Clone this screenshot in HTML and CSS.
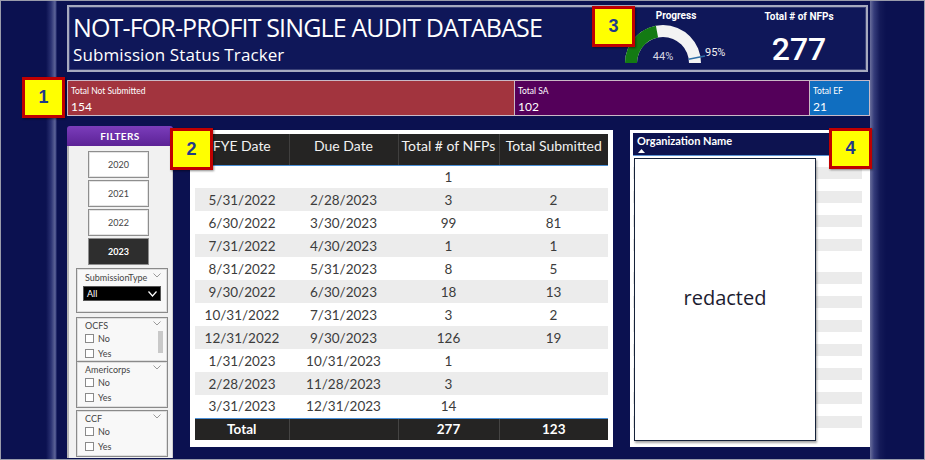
FILE: index.html
```html
<!DOCTYPE html>
<html>
<head>
<meta charset="utf-8">
<title>Not-for-Profit Single Audit Database</title>
<link rel="stylesheet" href="styles.css">
</head>
<body>
<div class="frame">
  <div class="side side-left"></div>
  <main class="canvas">
    <header class="banner">
      <div class="titles">
        <div class="title">NOT-FOR-PROFIT SINGLE AUDIT DATABASE</div>
        <div class="subtitle">Submission Status Tracker</div>
      </div>
      <div class="gauge">
        <div class="kpi-label">Progress</div>
        <svg class="gauge-svg" width="122" height="48" viewBox="0 0 122 48">
          <path d="M10 41 A38 38 0 0 1 86 41 L74 41 A26 26 0 0 0 22 41 Z" fill="#f3f3f3"/>
          <path d="M10 41 A38 38 0 0 1 40.9 3.7 L43.1 15.5 A26 26 0 0 0 22 41 Z" fill="#137a13"/>
          <line x1="73.5" y1="37.2" x2="90" y2="34" stroke="#2f6ea6" stroke-width="1.4"/>
          <text x="48" y="38" text-anchor="middle" class="g-val">44%</text>
          <text x="90" y="34" class="g-tgt">95%</text>
        </svg>
      </div>
      <div class="total">
        <div class="kpi-label">Total # of NFPs</div>
        <div class="total-value">277</div>
      </div>
    </header>

    <section class="status">
      <div class="stat stat-red"><span class="stat-label">Total Not Submitted</span><span class="stat-value">154</span></div>
      <div class="stat stat-purple"><span class="stat-label">Total SA</span><span class="stat-value">102</span></div>
      <div class="stat stat-blue"><span class="stat-label">Total EF</span><span class="stat-value">21</span></div>
    </section>

    <section class="main">
      <aside class="filters">
        <div class="filters-head">FILTERS</div>
        <div class="filters-body">
          <div class="year">2020</div>
          <div class="year">2021</div>
          <div class="year">2022</div>
          <div class="year active">2023</div>

          <div class="slicer slicer-type">
            <div class="slicer-head"><span>SubmissionType</span><svg class="chev" width="8" height="5" viewBox="0 0 8 5"><polyline points="0.5,0.5 4,4 7.5,0.5" fill="none" stroke="#9a9a9a" stroke-width="1"/></svg></div>
            <div class="dropdown"><span>All</span><svg width="9" height="6" viewBox="0 0 9 6"><polyline points="0.5,0.5 4.5,5 8.5,0.5" fill="none" stroke="#fff" stroke-width="1.2"/></svg></div>
          </div>

          <div class="slicer slicer-ocfs">
            <div class="slicer-head"><span>OCFS</span><svg class="chev" width="8" height="5" viewBox="0 0 8 5"><polyline points="0.5,0.5 4,4 7.5,0.5" fill="none" stroke="#9a9a9a" stroke-width="1"/></svg></div>
            <div class="opt"><span class="box"></span>No</div>
            <div class="opt"><span class="box"></span>Yes</div>
            <div class="scroll"></div>
          </div>

          <div class="slicer slicer-amer">
            <div class="slicer-head"><span>Americorps</span><svg class="chev" width="8" height="5" viewBox="0 0 8 5"><polyline points="0.5,0.5 4,4 7.5,0.5" fill="none" stroke="#9a9a9a" stroke-width="1"/></svg></div>
            <div class="opt"><span class="box"></span>No</div>
            <div class="opt"><span class="box"></span>Yes</div>
          </div>

          <div class="slicer slicer-ccf">
            <div class="slicer-head"><span>CCF</span><svg class="chev" width="8" height="5" viewBox="0 0 8 5"><polyline points="0.5,0.5 4,4 7.5,0.5" fill="none" stroke="#9a9a9a" stroke-width="1"/></svg></div>
            <div class="opt"><span class="box"></span>No</div>
            <div class="opt"><span class="box"></span>Yes</div>
          </div>
        </div>
      </aside>

      <div class="table-panel">
        <table class="grid">
          <colgroup><col class="c1"><col class="c2"><col class="c3"><col class="c4"></colgroup>
          <thead>
            <tr><th>FYE Date</th><th>Due Date</th><th>Total # of NFPs</th><th>Total Submitted</th></tr>
          </thead>
          <tbody>
            <tr><td></td><td></td><td>1</td><td></td></tr>
            <tr><td>5/31/2022</td><td>2/28/2023</td><td>3</td><td>2</td></tr>
            <tr><td>6/30/2022</td><td>3/30/2023</td><td>99</td><td>81</td></tr>
            <tr><td>7/31/2022</td><td>4/30/2023</td><td>1</td><td>1</td></tr>
            <tr><td>8/31/2022</td><td>5/31/2023</td><td>8</td><td>5</td></tr>
            <tr><td>9/30/2022</td><td>6/30/2023</td><td>18</td><td>13</td></tr>
            <tr><td>10/31/2022</td><td>7/31/2023</td><td>3</td><td>2</td></tr>
            <tr><td>12/31/2022</td><td>9/30/2023</td><td>126</td><td>19</td></tr>
            <tr><td>1/31/2023</td><td>10/31/2023</td><td>1</td><td></td></tr>
            <tr><td>2/28/2023</td><td>11/28/2023</td><td>3</td><td></td></tr>
            <tr><td>3/31/2023</td><td>12/31/2023</td><td>14</td><td></td></tr>
          </tbody>
          <tfoot>
            <tr><td>Total</td><td></td><td>277</td><td>123</td></tr>
          </tfoot>
        </table>
      </div>

      <div class="org-panel">
        <div class="org-head">
          <div>Organization Name</div>
          <svg width="7" height="4" viewBox="0 0 7 4"><polygon points="0,4 3.5,0 7,4" fill="#fff"/></svg>
        </div>
        <div class="org-list">
          <div class="org-row"></div>
          <div class="org-row"></div>
          <div class="org-row"></div>
          <div class="org-row wide"></div>
          <div class="org-row"></div>
          <div class="org-row"></div>
          <div class="org-row"></div>
          <div class="org-row"></div>
          <div class="org-row"></div>
          <div class="org-row"></div>
          <div class="org-row"></div>
        </div>
        <div class="redacted">redacted</div>
      </div>
    </section>
  </main>
  <div class="side side-right"></div>

  <div class="badge b1">1</div>
  <div class="badge b2">2</div>
  <div class="badge b3">3</div>
  <div class="badge b4">4</div>
</div>
</body>
</html>
```

FILE: styles.css
```css
* { box-sizing: border-box; margin: 0; padding: 0; }

html, body {
  width: 925px;
  height: 460px;
  overflow: hidden;
  background: #0b1150;
}

body {
  font-family: Lato, "Open Sans", sans-serif;
}

.frame {
  position: relative;
  display: flex;
  width: 925px;
  height: 460px;
  border: 1px solid #9a9cab;
  background: #0b1150;
}

.side { flex: none; }

.side-left {
  width: 56px;
  background: linear-gradient(to right, #0b1150 0, #0b1150 45px, #2a3172 50px, #5d6497 54px, #3a4180 55px, #0b1150 56px);
}

.side-right {
  flex: 1;
  background: linear-gradient(to right, #6a6f9c 0, #353c7a 4px, #141a58 10px, #0b1150 16px);
}

.canvas {
  flex: none;
  width: 813px;
  padding: 4px 0 0 10px;
  display: flex;
  flex-direction: column;
  background: #0b1150;
}

/* ---------- banner ---------- */
.banner {
  width: 801px;
  height: 67px;
  flex: none;
  display: flex;
  padding: 0 22px 0 4px;
  background: #0f1759;
  border: 2px solid #a7aabf;
  box-shadow: inset 0 0 0 1px #3a4177;
}

.titles {
  flex: 1;
  display: flex;
  flex-direction: column;
  color: #fff;
  font-family: "Open Sans", sans-serif;
}

.title {
  font-size: 25px;
  line-height: 30px;
  margin-top: 5px;
  letter-spacing: -0.85px;
}

.subtitle {
  font-size: 17px;
  line-height: 22px;
  margin-top: 2px;
  letter-spacing: 0.1px;
}

.gauge {
  width: 122px;
  flex: none;
  display: flex;
  flex-direction: column;
  align-items: center;
  padding-top: 3px;
}

.kpi-label {
  font-family: Roboto, sans-serif;
  font-weight: bold;
  font-size: 10px;
  line-height: 12px;
  color: #fff;
}

.gauge-svg { display: block; }

.g-val, .g-tgt {
  font-family: Roboto, sans-serif;
  font-size: 11px;
}
.g-val { fill: #d8d8e2; }
.g-tgt { fill: #f2f2f2; }

.total {
  width: 90px;
  flex: none;
  margin-left: 17px;
  display: flex;
  flex-direction: column;
  align-items: center;
  padding-top: 4px;
}

.total-value {
  font-family: Roboto, sans-serif;
  font-weight: 500;
  font-size: 32px;
  line-height: 36px;
  color: #fff;
  margin-top: 8px;
}

/* ---------- status ---------- */
.status {
  margin-top: 8px;
  width: 803px;
  height: 36px;
  flex: none;
  display: flex;
}

.stat {
  display: flex;
  flex-direction: column;
  justify-content: space-between;
  padding: 5px 3px 1px;
  border: 1px solid #c9b9c6;
  color: #fff;
  font-family: Lato, sans-serif;
}

.stat-label { font-size: 8.5px; line-height: 11px; }
.stat-value { font-size: 12px; line-height: 15px; }

.stat-red { width: 448px; background: #a2343e; }
.stat-purple { width: 295px; background: #54005a; border-left: none; }
.stat-blue { flex: 1; background: #106ec0; border-left: none; }

/* ---------- main ---------- */
.main {
  margin-top: 9px;
  flex: 1;
  display: flex;
  align-items: flex-start;
}

/* filters */
.filters {
  width: 106px;
  height: 332px;
  margin-top: 1px;
  flex: none;
  display: flex;
  flex-direction: column;
}

.filters-head {
  height: 20px;
  flex: none;
  border-radius: 3px 3px 0 0;
  background: linear-gradient(#7b3dbb, #5c2296);
  color: #fff;
  font-size: 10px;
  font-weight: bold;
  letter-spacing: 0.4px;
  text-align: center;
  line-height: 20px;
}

.filters-body {
  flex: 1;
  background: #f1f1f1;
  border-left: 2px solid #b4b4b4;
  border-right: 1px solid #cfcfcf;
  padding-top: 5px;
  display: flex;
  flex-direction: column;
}

.year {
  width: 61px;
  height: 27px;
  margin-left: 19px;
  margin-bottom: 2px;
  background: #fff;
  border: 1px solid #8e8e8e;
  box-shadow: inset 0 0 0 1px #e4e4e4;
  color: #444;
  font-size: 9px;
  display: flex;
  align-items: center;
  justify-content: center;
}

.year.active {
  background: #2e2e2e;
  color: #fff;
  font-weight: bold;
  box-shadow: none;
}

.slicer {
  position: relative;
  width: 92px;
  margin-left: 7px;
  background: #f8f8f8;
  border: 1px solid #8a8a8a;
  box-shadow: inset 0 0 0 1px #dedede;
  padding-top: 1px;
  flex: none;
}

.slicer-type { margin-top: 1px; height: 45px; padding-top: 2px; }
.slicer-ocfs { margin-top: 4px; height: 45px; }
.slicer-amer { height: 46px; border-top: none; }
.slicer-ccf { margin-top: 2px; height: 47px; }

.slicer-head {
  display: flex;
  justify-content: space-between;
  align-items: center;
  height: 12px;
  padding: 0 6px 0 8px;
  font-size: 9px;
  color: #444;
}

.slicer-head .chev { margin-top: -3px; }

.dropdown {
  margin: 3px 0 0 6px;
  width: 78px;
  height: 15px;
  background: #000;
  border: 1px solid #555;
  color: #fff;
  font-size: 9px;
  display: flex;
  align-items: center;
  justify-content: space-between;
  padding: 0 3px 0 3px;
}

.opt {
  display: flex;
  align-items: center;
  height: 15px;
  padding-left: 8px;
  font-size: 9px;
  color: #444;
}

.box {
  width: 9px;
  height: 9px;
  border: 1px solid #8a8a8a;
  background: #fff;
  margin-right: 4px;
}

.scroll {
  position: absolute;
  right: 4px;
  top: 13px;
  width: 5px;
  height: 22px;
  background: #c9c9c9;
}

/* table */
.table-panel {
  width: 423px;
  height: 317px;
  margin: 5px 0 0 17px;
  flex: none;
  background: #fff;
  padding: 4px 5px;
}

.grid {
  width: 413px;
  border-collapse: collapse;
  table-layout: fixed;
  font-family: Lato, sans-serif;
}

.c1 { width: 94px; }
.c2 { width: 109px; }
.c3 { width: 101px; }
.c4 { width: 109px; }

.grid th {
  height: 31px;
  background: #252423;
  color: #f2f2f2;
  font-weight: normal;
  font-size: 14px;
  padding: 0 0 7px;
  border-left: 1px solid #403f3e;
  border-bottom: 1px solid #4a8fd6;
}

.grid th:first-child, .grid tfoot td:first-child { border-left: none; }

.grid tbody td {
  height: 23px;
  text-align: center;
  font-size: 13.5px;
  color: #3c3c3c;
  padding: 0;
}

.grid tbody tr:nth-child(even) td { background: #ececec; }

.grid tfoot td {
  height: 22px;
  background: #252423;
  color: #fff;
  font-weight: bold;
  font-size: 13.5px;
  text-align: center;
  border-top: 1px solid #4a8fd6;
  border-left: 1px solid #454443;
}

/* org panel */
.org-panel {
  position: relative;
  width: 240px;
  height: 317px;
  margin: 5px 0 0 17px;
  flex: none;
  background: #fff;
  padding: 3px 8px 6px 3px;
  display: flex;
  flex-direction: column;
}

.org-head {
  height: 23px;
  flex: none;
  background: #0d1350;
  border-bottom: 1px solid #5b93d3;
  color: #fff;
  font-family: Lato, sans-serif;
  font-weight: bold;
  font-size: 11px;
  line-height: 12px;
  padding: 2px 4px 0;
}

.org-head svg { display: block; margin: 2px 0 0 1px; }

.org-list {
  flex: 1;
  padding-top: 11px;
}

.org-row {
  height: 12px;
  margin-bottom: 12px;
  background: #ebebeb;
}

.org-row.wide { margin-bottom: 21px; }

.redacted {
  position: absolute;
  left: 4px;
  top: 28px;
  width: 182px;
  height: 283px;
  background: #fff;
  border: 1px solid #15223a;
  box-shadow: 1px 2px 2px rgba(0, 0, 0, 0.35);
  display: flex;
  align-items: center;
  justify-content: center;
  font-family: "Open Sans", sans-serif;
  font-size: 20px;
  color: #1c1c30;
  padding-bottom: 4px;
}

/* callout badges */
.badge {
  position: absolute;
  display: flex;
  align-items: center;
  justify-content: center;
  background: #ffff00;
  border: 3px solid #c00000;
  box-shadow: 1px 1px 2px rgba(0, 0, 0, 0.45);
  color: #1f3a8a;
  font-family: "Liberation Sans", sans-serif;
  font-weight: bold;
  font-size: 18px;
}

.b1 { left: 21px; top: 76px; width: 43px; height: 41px; }
.b2 { left: 169px; top: 127px; width: 43px; height: 42px; }
.b3 { left: 591px; top: 5px; width: 43px; height: 41px; }
.b4 { left: 828px; top: 127px; width: 43px; height: 41px; }
```
